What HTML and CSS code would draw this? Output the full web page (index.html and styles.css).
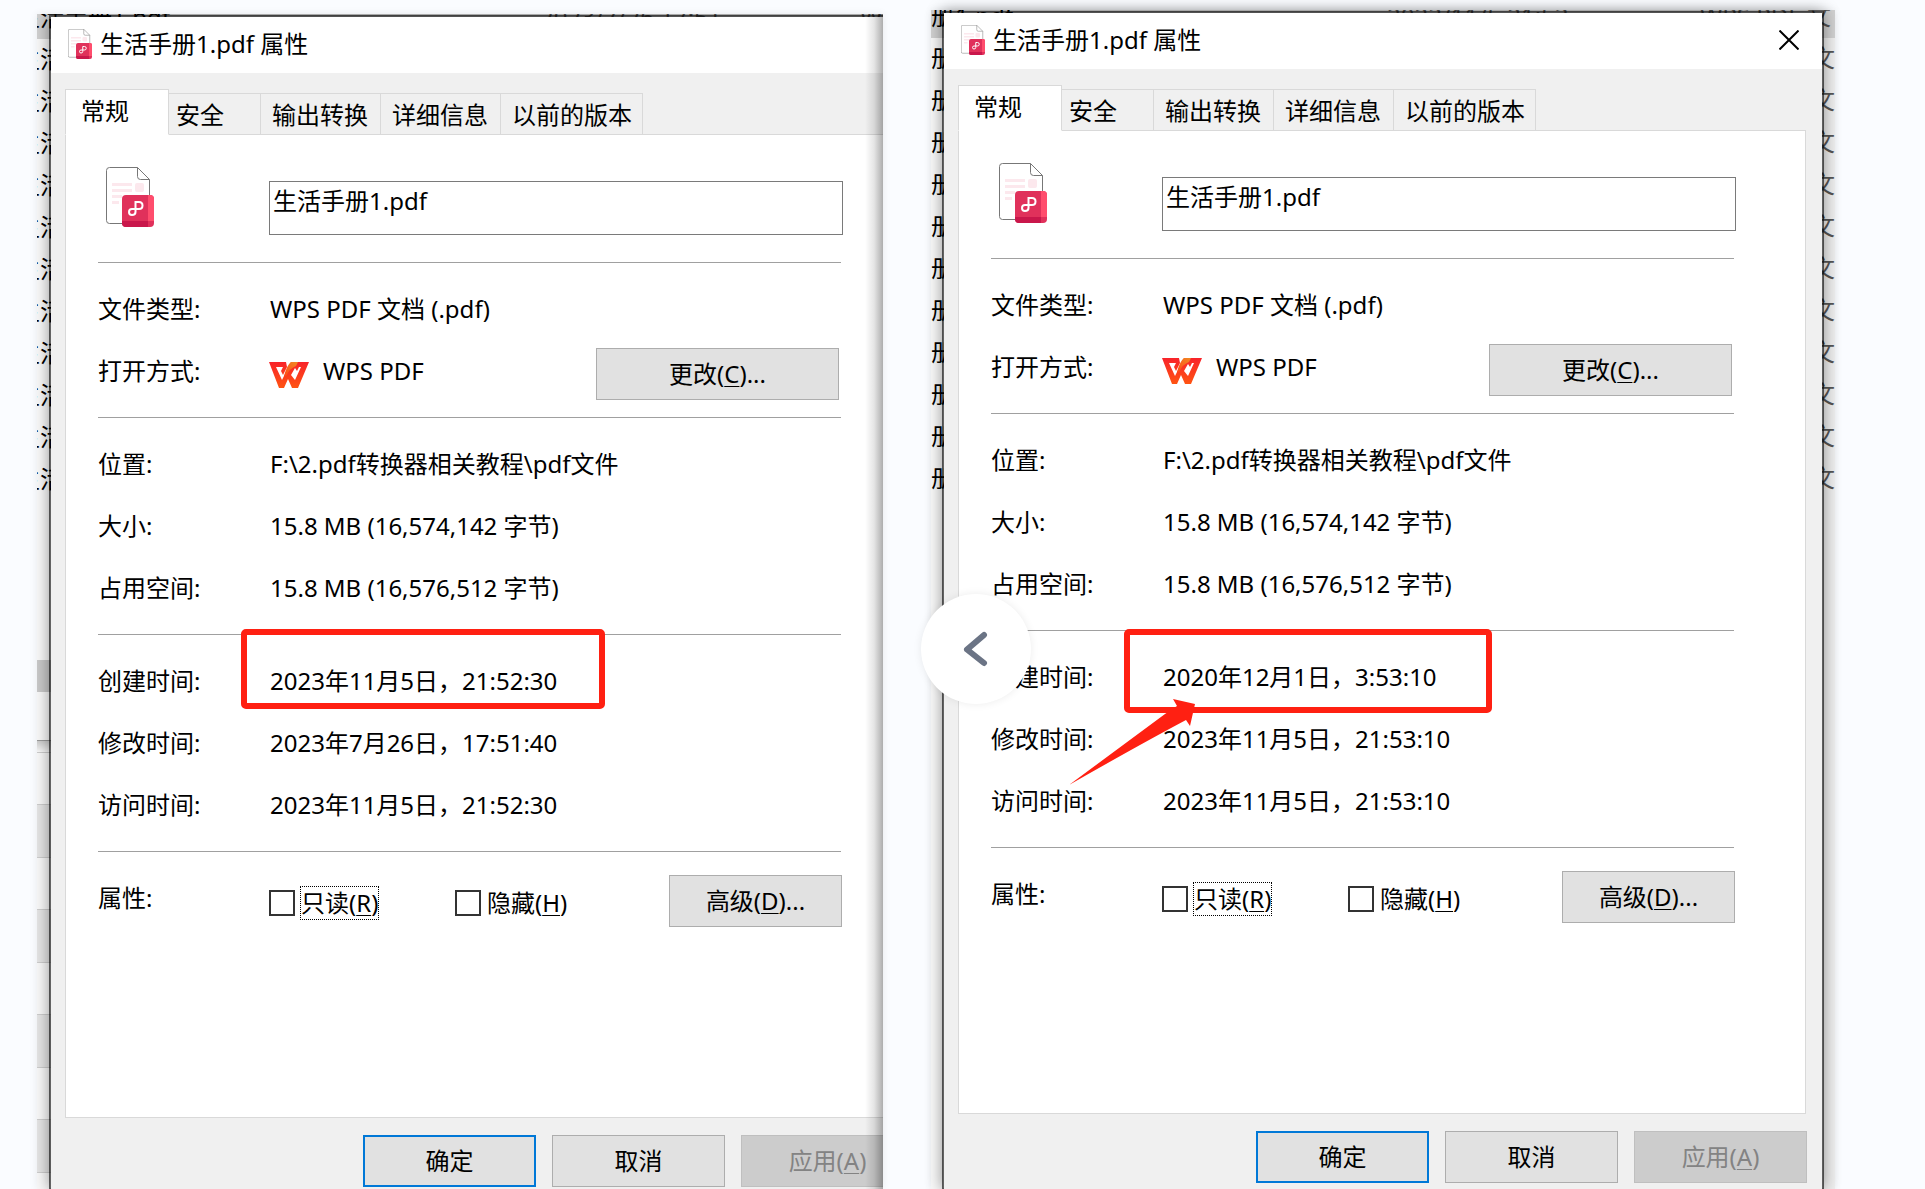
FILE: index.html
```
<!DOCTYPE html>
<html lang="zh-CN">
<head>
  <meta charset="UTF-8">
  <meta name="viewport" content="width=device-width, initial-scale=1.0">
  <title>生活手册1.pdf 属性</title>
  <link rel="stylesheet" href="styles.css">
</head>
<body>
  <svg class="sprite" aria-hidden="true">
    <symbol id="icon-pdf" viewBox="0 0 48 60">
      <path d="M3.500.5H31.500L43.500 12.500V56.500H3.500Q.5 56.500.5 53.500V3.500Q.5.5 3.500.5Z" fill="#fff" stroke="#777"/>
      <path d="M31.500.5V9.500Q31.500 12.500 34.500 12.500H43.500" fill="none" stroke="#777"/>
      <path d="M6 16h20v3H6zM6 22h20v3H6zM6 28h10v3H6zM6 34h7v3H6z" fill="#fce8ed"/>
      <rect x="29" y="16" width="9" height="9" rx="2" fill="#fce8ed"/>
      <rect x="16" y="28" width="32" height="32" rx="4" fill="#e0315b"/>
      <path d="M42 28h2q4 0 4 4v22h-6z" fill="#ff4d6d"/>
      <path d="M16 54h26v6H20q-4 0-4-4z" fill="#c9174b"/>
      <path d="M29.500 45V35H33Q36.500 35 36.500 38.500T33 42H26Q23 42 23 45T26 48Q29.500 48 29.500 45Z" fill="none" stroke="#fff" stroke-width="2"/>
    </symbol>
    <symbol id="icon-wps" viewBox="0 0 40 26">
      <defs>
        <linearGradient id="wps-red" x1="0" y1="0" x2="0" y2="1">
          <stop offset="0" stop-color="#f8232a"/>
          <stop offset="1" stop-color="#ff5412"/>
        </linearGradient>
        <linearGradient id="wps-orange" x1="1" y1="0" x2="0" y2="1">
          <stop offset="0" stop-color="#f08a24"/>
          <stop offset="1" stop-color="#ff4a16"/>
        </linearGradient>
      </defs>
      <path d="M0 0H17L18 5L14 13L12 9L14 5H7L13 18L22 0H40L29 26H23L19 17L15 26H10ZM22 13L26 18L32 5H30L28 9L26 6Z" fill="url(#wps-red)" fill-rule="evenodd"/>
      <path d="M22 0H29L27 4Q21 6 17 14L15 14Q18 3 22 0Z" fill="url(#wps-orange)"/>
    </symbol>
  </svg>

  <main class="page">
    <section class="shot shot-before">
      <div class="backdrop" aria-hidden="true">
        <div class="file selected"><span>生活手册1.pdf</span><span>2023/7/26 17:51</span><span>WPS</span></div>
        <div class="file"><span>生活</span></div>
        <div class="file"><span>生活</span></div>
        <div class="file"><span>生活</span></div>
        <div class="file"><span>生活</span></div>
        <div class="file"><span>生活</span></div>
        <div class="file"><span>生活</span></div>
        <div class="file"><span>生活</span></div>
        <div class="file"><span>生活</span></div>
        <div class="file"><span>生活</span></div>
        <div class="file"><span>生活</span></div>
        <div class="file"><span>生活</span></div>
        <div class="scrollbar"></div>
        <div class="window-edge"></div>
        <div class="stripes"></div>
      </div>
      <div class="dialog">
        <header class="titlebar">
          <svg class="title-icon"><use href="#icon-pdf"/></svg>
          <h1>生活手册1.pdf 属性</h1>
        </header>
        <nav class="tabs">
          <button class="tab active">常规</button>
          <button class="tab short">安全</button>
          <button class="tab">输出转换</button>
          <button class="tab">详细信息</button>
          <button class="tab wide">以前的版本</button>
        </nav>
        <div class="pane">
          <div class="head">
            <svg class="file-icon"><use href="#icon-pdf"/></svg>
            <input class="name" type="text" value="生活手册1.pdf" aria-label="文件名">
          </div>
          <dl class="group">
            <div class="row"><dt>文件类型:</dt><dd>WPS PDF 文档 (.pdf)</dd></div>
            <div class="row">
              <dt>打开方式:</dt>
              <dd class="app"><svg class="app-icon"><use href="#icon-wps"/></svg>WPS PDF</dd>
              <dd class="action"><button class="btn btn-change">更改(<u>C</u>)...</button></dd>
            </div>
          </dl>
          <dl class="group">
            <div class="row"><dt>位置:</dt><dd>F:\2.pdf转换器相关教程\pdf文件</dd></div>
            <div class="row"><dt>大小:</dt><dd>15.8 MB (16,574,142 字节)</dd></div>
            <div class="row"><dt>占用空间:</dt><dd>15.8 MB (16,576,512 字节)</dd></div>
          </dl>
          <dl class="group">
            <div class="row marked"><dt>创建时间:</dt><dd>2023年11月5日，21:52:30</dd></div>
            <div class="row"><dt>修改时间:</dt><dd>2023年7月26日，17:51:40</dd></div>
            <div class="row"><dt>访问时间:</dt><dd>2023年11月5日，21:52:30</dd></div>
          </dl>
          <div class="group attrs">
            <span class="attrs-label">属性:</span>
            <label class="check"><input type="checkbox"><span class="focused">只读(<u>R</u>)</span></label>
            <label class="check"><input type="checkbox"><span>隐藏(<u>H</u>)</span></label>
            <button class="btn">高级(<u>D</u>)...</button>
          </div>
        </div>
        <footer class="buttons">
          <button class="btn btn-default">确定</button>
          <button class="btn">取消</button>
          <button class="btn" disabled>应用(<u>A</u>)</button>
        </footer>
      </div>
    </section>

    <section class="shot shot-after">
      <div class="backdrop" aria-hidden="true">
        <div class="file selected"><span>册1.pdf</span><span>2023/11/5 21:53</span><span>WPS PDF 文</span></div>
        <div class="file"><span>册</span><span>文</span></div>
        <div class="file"><span>册</span><span>文</span></div>
        <div class="file"><span>册</span><span>文</span></div>
        <div class="file"><span>册</span><span>文</span></div>
        <div class="file"><span>册</span><span>文</span></div>
        <div class="file"><span>册</span><span>文</span></div>
        <div class="file"><span>册</span><span>文</span></div>
        <div class="file"><span>册</span><span>文</span></div>
        <div class="file"><span>册</span><span>文</span></div>
        <div class="file"><span>册</span><span>文</span></div>
        <div class="file"><span>册</span><span>文</span></div>
      </div>
      <div class="dialog">
        <header class="titlebar">
          <svg class="title-icon"><use href="#icon-pdf"/></svg>
          <h1>生活手册1.pdf 属性</h1>
          <button class="close" aria-label="关闭">
            <svg viewBox="0 0 20 20"><path d="M.5.5l19 19M19.500.5l-19 19" stroke="#000" stroke-width="2"/></svg>
          </button>
        </header>
        <nav class="tabs">
          <button class="tab active">常规</button>
          <button class="tab short">安全</button>
          <button class="tab">输出转换</button>
          <button class="tab">详细信息</button>
          <button class="tab wide">以前的版本</button>
        </nav>
        <div class="pane">
          <div class="head">
            <svg class="file-icon"><use href="#icon-pdf"/></svg>
            <input class="name" type="text" value="生活手册1.pdf" aria-label="文件名">
          </div>
          <dl class="group">
            <div class="row"><dt>文件类型:</dt><dd>WPS PDF 文档 (.pdf)</dd></div>
            <div class="row">
              <dt>打开方式:</dt>
              <dd class="app"><svg class="app-icon"><use href="#icon-wps"/></svg>WPS PDF</dd>
              <dd class="action"><button class="btn btn-change">更改(<u>C</u>)...</button></dd>
            </div>
          </dl>
          <dl class="group">
            <div class="row"><dt>位置:</dt><dd>F:\2.pdf转换器相关教程\pdf文件</dd></div>
            <div class="row"><dt>大小:</dt><dd>15.8 MB (16,574,142 字节)</dd></div>
            <div class="row"><dt>占用空间:</dt><dd>15.8 MB (16,576,512 字节)</dd></div>
          </dl>
          <dl class="group">
            <div class="row marked"><dt>创建时间:</dt><dd>2020年12月1日，3:53:10</dd></div>
            <div class="row"><dt>修改时间:</dt><dd>2023年11月5日，21:53:10</dd></div>
            <div class="row"><dt>访问时间:</dt><dd>2023年11月5日，21:53:10</dd></div>
          </dl>
          <div class="group attrs">
            <span class="attrs-label">属性:</span>
            <label class="check"><input type="checkbox"><span class="focused">只读(<u>R</u>)</span></label>
            <label class="check"><input type="checkbox"><span>隐藏(<u>H</u>)</span></label>
            <button class="btn">高级(<u>D</u>)...</button>
          </div>
        </div>
        <footer class="buttons">
          <button class="btn btn-default">确定</button>
          <button class="btn">取消</button>
          <button class="btn" disabled>应用(<u>A</u>)</button>
        </footer>
      </div>
      <svg class="arrow" viewBox="0 0 126 88" aria-hidden="true">
        <path d="M0 86L96 15L108 7L104 0L126 5L121 27L117 21Q70 46 0 86Z" fill="#ff2012"/>
      </svg>
      <button class="prev" aria-label="上一张">
        <svg viewBox="0 0 26 36"><path d="M21 4L4 18.500L21 32" fill="none" stroke="#6b7485" stroke-width="6" stroke-linecap="round" stroke-linejoin="round"/></svg>
      </button>
    </section>
  </main>
</body>
</html>
```
FILE: styles.css
```
*,
*::before,
*::after {
  box-sizing: border-box;
}
body {
  margin: 0;
  background: #fafcff;
  color: #000;
  font-family: "Noto Sans", "Noto Sans CJK SC", sans-serif;
  font-size: 24px;
  line-height: 32px;
}
button,
input {
  font: inherit;
  color: inherit;
  margin: 0;
}
u {
  text-decoration-thickness: 1px;
  text-underline-offset: 3px;
}
.sprite {
  position: absolute;
  width: 0;
  height: 0;
}
.page {
  display: grid;
  grid-template-columns: 846fr 904fr;
  gap: 48px;
  height: 100vh;
  padding: 0 90px 0 37px;
  overflow: hidden;
}

/* one captured desktop area: file list behind, dialog in front */
.shot {
  display: grid;
  grid-template-columns: minmax(0, 1fr);
  position: relative;
  min-height: 0;
  box-shadow: 0 0 8px rgba(0, 0, 0, 0.08);
}
.shot > .backdrop,
.shot > .dialog {
  grid-area: 1 / 1;
}
.shot-before {
  margin-top: 14px;
  overflow: hidden;
}
.shot-after {
  margin-top: 10px;
}
.shot-before::after {
  content: "";
  position: absolute;
  top: 0;
  right: 0;
  bottom: 0;
  width: 18px;
  background: linear-gradient(to right, rgba(0, 0, 0, 0), rgba(0, 0, 0, 0.1) 50%, rgba(0, 0, 0, 0.32));
}

.backdrop {
  background: #f8f8f8;
  overflow: hidden;
}
.shot-after .backdrop {
  background: linear-gradient(to right, #f8f8f8 50%, #eee 50%);
}
.file {
  display: flex;
  justify-content: space-between;
  height: 42px;
  line-height: 40px;
  white-space: nowrap;
}
.file span:not(:first-child) {
  color: #555;
}
.file.selected {
  display: grid;
  grid-template-columns: 456px 313px 1fr;
  background: #d0d0d0;
}
.shot-before .file span:first-child {
  text-indent: -21px;
}
.shot-before .selected {
  grid-template-columns: 503px 320px 1fr;
  margin-top: -17px;
}
.shot-after .selected {
  margin-top: -14px;
}
.scrollbar {
  height: 32px;
  margin-top: 159px;
  background: #c8c8c8;
}
.window-edge {
  height: 13px;
  margin-top: 48px;
  border-top: 1px solid #999;
  border-bottom: 1px solid #ccc;
  background: linear-gradient(#ccc, #f8f8f8);
}
.stripes {
  height: 450px;
  background: repeating-linear-gradient(#f8f8f8 0 51px, #ccc 51px 52px, #e4e4e4 52px 104px, #ccc 104px 105px);
}

.dialog {
  display: flex;
  flex-direction: column;
  position: relative;
  margin: 1px 11px 0;
  border: 2px solid rgba(0, 0, 0, 0.6);
  border-bottom: 0;
  background: #f0f0f0;
  background-clip: padding-box;
  box-shadow: 0 0 14px rgba(0, 0, 0, 0.4);
}
.shot-before .dialog {
  margin-left: 12px;
  margin-right: -48px;
}
.titlebar {
  display: flex;
  align-items: center;
  height: 56px;
  padding: 0 23px 2px 17px;
  background: #fff;
}
.title-icon {
  width: 24px;
  height: 30px;
}
.titlebar h1 {
  flex: 1;
  margin: 0 0 0 8px;
  font-size: 24px;
  font-weight: normal;
}
.close {
  width: 20px;
  height: 20px;
  padding: 0;
  border: 0;
  background: none;
}
.close svg {
  display: block;
}

.tabs {
  display: flex;
  align-items: flex-end;
  position: relative;
  margin: 16px 14px -1px;
}
.tab {
  width: 120px;
  height: 42px;
  padding: 2px 0 0 11px;
  border: 1px solid #d9d9d9;
  border-left: 0;
  background: #f0f0f0;
  text-align: left;
  white-space: nowrap;
}
.tab.active {
  width: 104px;
  height: 46px;
  padding: 0 0 2px 15px;
  border-left: 1px solid #d9d9d9;
  border-bottom-color: #fff;
  background: #fff;
}
.tab.short {
  width: 92px;
  padding-left: 7px;
}
.tab.wide {
  width: 142px;
}
.pane {
  margin: 0 16px 0 14px;
  padding: 32px 71px 183px 32px;
  border: 1px solid #d9d9d9;
  background: #fff;
}
.head {
  display: flex;
  padding: 0 0 27px 8px;
}
.file-icon {
  width: 48px;
  height: 60px;
  margin-right: 115px;
}
.name {
  flex: 1;
  min-width: 0;
  height: 54px;
  margin: 14px -2px 0 0;
  padding: 0 3px 18px;
  border: 1px solid #7a7a7a;
  background: #fff;
}
.group {
  margin: 0;
  padding: 15px 0;
  border-top: 1px solid #a0a0a0;
}
.row {
  display: flex;
  align-items: center;
  position: relative;
  height: 62px;
  white-space: nowrap;
}
.row dt {
  width: 172px;
}
.row dd {
  margin: 0;
}
.app {
  display: flex;
  align-items: center;
}
.app-icon {
  width: 40px;
  height: 26px;
  margin: 8px 14px 0 -1px;
}
.row .action {
  margin: 6px 2px 0 auto;
}

/* red frame round the creation time */
.marked::after {
  content: "";
  position: absolute;
  top: -21px;
  left: 143px;
  width: 364px;
  height: 80px;
  border: 6px solid #ff2012;
  border-radius: 5px;
}
.shot-after .marked::after {
  top: -17px;
  left: 133px;
  width: 368px;
  height: 84px;
}

.attrs {
  display: flex;
  align-items: center;
  padding: 17px 0 7px;
}
.attrs-label {
  width: 171px;
}
.check {
  display: flex;
  align-items: center;
  width: 186px;
  margin-top: 10px;
}
.check input {
  appearance: none;
  width: 26px;
  height: 26px;
  margin-right: 6px;
  border: 2px solid #333;
  background: #fff;
}
.check .focused {
  outline: 1px dotted #000;
}
.btn {
  width: 173px;
  height: 52px;
  padding: 0;
  border: 1px solid #adadad;
  background: #e1e1e1;
}
.btn-change {
  display: block;
  width: 243px;
}
.attrs .btn {
  margin: 6px -1px 0 auto;
}
.btn-default {
  border: 2px solid #0078d7;
}
.btn:disabled {
  border-color: #bfbfbf;
  background: #ccc;
  color: #838383;
}
.buttons {
  display: flex;
  justify-content: flex-end;
  gap: 16px;
  padding: 17px 15px 0;
}

.arrow {
  position: absolute;
  top: 689px;
  left: 138px;
  width: 126px;
  height: 88px;
}
.prev {
  display: flex;
  align-items: center;
  justify-content: center;
  position: absolute;
  top: 584px;
  left: -10px;
  width: 110px;
  height: 110px;
  padding: 0;
  border: 0;
  border-radius: 50%;
  background: #fff;
  box-shadow: 0 0 8px rgba(0, 0, 0, 0.08);
}
.prev svg {
  width: 26px;
  height: 36px;
}
```
